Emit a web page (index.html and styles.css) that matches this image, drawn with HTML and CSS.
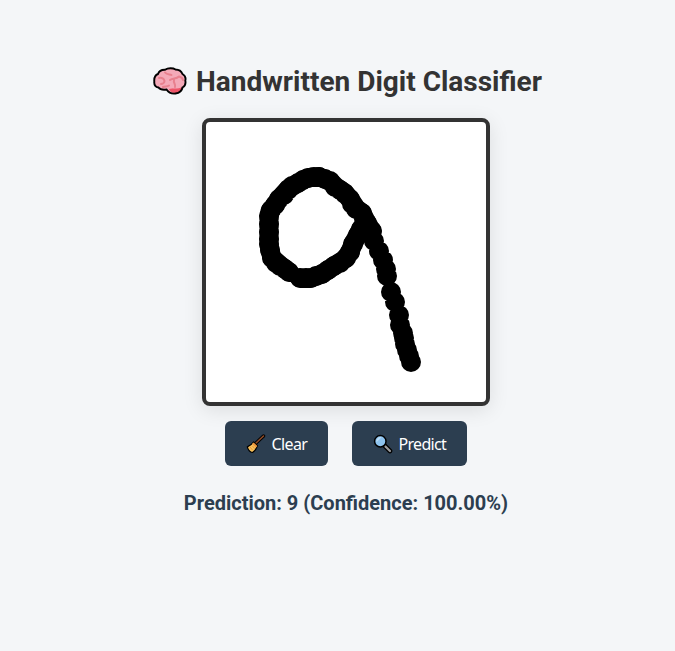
FILE: index.html
```html
<!DOCTYPE html>
<html lang="en">
<head>
<meta charset="UTF-8">
<title>Handwritten Digit Classifier</title>
<link rel="stylesheet" href="styles.css">
</head>
<body>
<main class="app">
  <h1 class="title">
    <svg class="brain" viewBox="0 0 34 28" aria-hidden="true">
      <path d="M1.3 14.5C1 11 2.500 8 5 7C6 4 9 2.700 12 2.800C15 .7 20 .8 22.500 2.500C26 2.600 28.500 4.500 29.500 7C32 8.500 33 11 32.300 13.500C33 17 31.500 19.500 29.500 20.500C29 23.500 26.500 26 22.500 26.500C18.500 27 15.500 25.500 13.500 22.500C10 23 7 22.500 5.500 20.500C2.500 20 1 17.500 1.300 14.500Z" fill="#f4a9b8"/>
      <path d="M16 22C20 21 24 22.500 30 20C29 24 26 26.500 22 26.300C19 26 17 24.500 16 22Z" fill="#ee5468"/>
      <path d="M6 11C9 10 11 12 11.500 14C11.500 16 9.500 17 8 17M12 5.500C14 8 17 7 18.500 8M17 13C20 10.500 23 12.500 26 9.500M21 13C20 16 23 17 22 20M26 9.500C28 10 29.500 11 30 13M10 20C12 19 14 20 16 18.500" fill="none" stroke="#e8808e" stroke-width="2" stroke-linecap="round"/>
      <path d="M1.300 14.500C1 11 2.500 8 5 7C6 4 9 2.700 12 2.800C15 .7 20 .8 22.500 2.500C26 2.600 28.500 4.500 29.500 7C32 8.500 33 11 32.300 13.500C33 17 31.500 19.500 29.500 20.500C29 23.500 26.500 26 22.500 26.500C18.500 27 15.500 25.500 13.500 22.500C10 23 7 22.500 5.500 20.500C2.500 20 1 17.500 1.300 14.500Z" fill="none" stroke="#000" stroke-width="1.900"/>
    </svg>
    <span class="title-text">Handwritten Digit Classifier</span>
  </h1>
  <svg class="pad" viewBox="206 122 280 280" role="img" aria-label="Drawing area">
    <path class="ink core" d="M325 179L319 177H312L305 179L298 183L288 189L279 199L275 205L270 211L269 217V244L270 250L272 258L280 265L289 272M300 278H311L322 274L334 266L345 259L350 252L353 244L361 229M325 179L331 182L336 187L345 193L350 199L356 208L362 213L367 223L372 231"/>
    <path class="ink" d="M319 177h0M314 177h0M308 178h0M303 180h0M298 183h0M292 186h0M288 190h0M284 195h0M279 199h0M275 205h0M271 210h0M269 216h0M269 224h0M269 232h0M269 239h0M269 244h0M270 250h0M272 258h0M276 263h0M280 266h0M285 269h0M289 272h0M300 278h0M306 278h0M311 278h0M316 276h0M322 274h0M328 270h0M334 266h0M340 263h0M346 258h0M350 252h0M353 244h0M358 235h0M361 229h0"/>
    <path class="ink" d="M319 177h0M325 179h0M330 181h0M335 187h0M340 190h0M345 194h0M350 199h0M352 204h0M356 209h0M362 213h0M364 219h0M367 223h0M372 231h0M374 241h0M379 251h0M383 260h0M386 269h0M387 276h0M391 292h0M395 302h0M399 315h0M400 325h0M403 333h0M404 338h0M405 344h0M407 350h0M409 356h0M411 362h0"/>
  </svg>
  <div class="actions">
    <button class="btn clear">
      <svg class="icon" viewBox="0 0 20 20" aria-hidden="true">
        <path d="M9.500 9.500L17.500 2" stroke="#000" stroke-width="3.400" stroke-linecap="round"/>
        <path d="M9.500 9.500L17.500 2" stroke="#8f4b27" stroke-width="1.500" stroke-linecap="round"/>
        <path d="M7.500 8C5.500 11 3 12 1.300 12.800C2 15.500 4 18 6.500 18.500C9 17 10.500 14.500 11.500 11.800Z" fill="#f9c15a" stroke="#000" stroke-width="1.200" stroke-linejoin="round"/>
        <path d="M7.500 8.500L11.300 12L10 13.500L6 10Z" fill="#ed963d"/>
        <path d="M4 13L6.500 16M6.500 12L8.500 14.500" stroke="#dd8b36" stroke-width=".8"/>
      </svg>
      <span class="clear-label">Clear</span>
    </button>
    <button class="btn predict">
      <svg class="icon" viewBox="0 0 20 20" aria-hidden="true">
        <path d="M11.500 11.500L17 17" stroke="#000" stroke-width="4.600" stroke-linecap="round"/>
        <path d="M12.500 12.500L17 17" stroke="#9b9b9d" stroke-width="2.200" stroke-linecap="round"/>
        <circle cx="7.300" cy="7.200" r="5.700" fill="#8ec3ee" stroke="#000" stroke-width="1.500"/>
        <path d="M3.500 8.200A4 4 0 0 1 8.500 3.300Z" fill="#b9dcf6"/>
      </svg>
      <span class="predict-label">Predict</span>
    </button>
  </div>
  <p class="result">Prediction: 9 (Confidence: 100.00%)</p>
</main>
</body>
</html>
```
FILE: styles.css
```css
html {
  overflow: hidden;
}
body {
  margin: 0;
  background: #f4f6f8;
  font-family: Roboto, sans-serif;
}
.app {
  box-sizing: border-box;
  width: 692px;
  height: 651px;
  padding-top: 65px;
  display: flex;
  flex-direction: column;
  align-items: center;
}
.title {
  display: flex;
  align-items: center;
  gap: 9px;
  height: 34px;
  margin: 0 0 19px 3px;
  color: #333;
  font-size: 28px;
  font-weight: 700;
  line-height: 34px;
  white-space: nowrap;
}
.brain {
  width: 34px;
  height: 28px;
  margin-top: -2px;
}
.pad {
  box-sizing: content-box;
  width: 280px;
  height: 280px;
  border: 4px solid #333;
  border-radius: 8px;
  background: #fff;
  box-shadow: 0 4px 20px rgba(0, 0, 0, 0.1);
}
.ink {
  fill: none;
  stroke: #000;
  stroke-width: 20;
  stroke-linecap: round;
  stroke-linejoin: round;
}
.core {
  stroke-width: 19;
}
.actions {
  display: flex;
  gap: 24px;
  margin-top: 15px;
}
.btn {
  display: flex;
  align-items: center;
  height: 45px;
  padding: 0 0 0 21px;
  border: 0;
  border-radius: 6px;
  background: #2c3e50;
  color: #fff;
  font: 16px "Noto Sans", sans-serif;
  white-space: nowrap;
}
.clear {
  width: 103px;
}
.predict {
  width: 115px;
}
.icon {
  flex: none;
  width: 20px;
  height: 20px;
  margin-right: 5.5px;
}
.clear-label {
  letter-spacing: -0.6px;
}
.predict-label {
  letter-spacing: -0.7px;
}
.result {
  margin: 25px 0 0;
  color: #2c3e50;
  font-size: 20px;
  font-weight: 700;
  line-height: 24px;
  white-space: nowrap;
}
```
